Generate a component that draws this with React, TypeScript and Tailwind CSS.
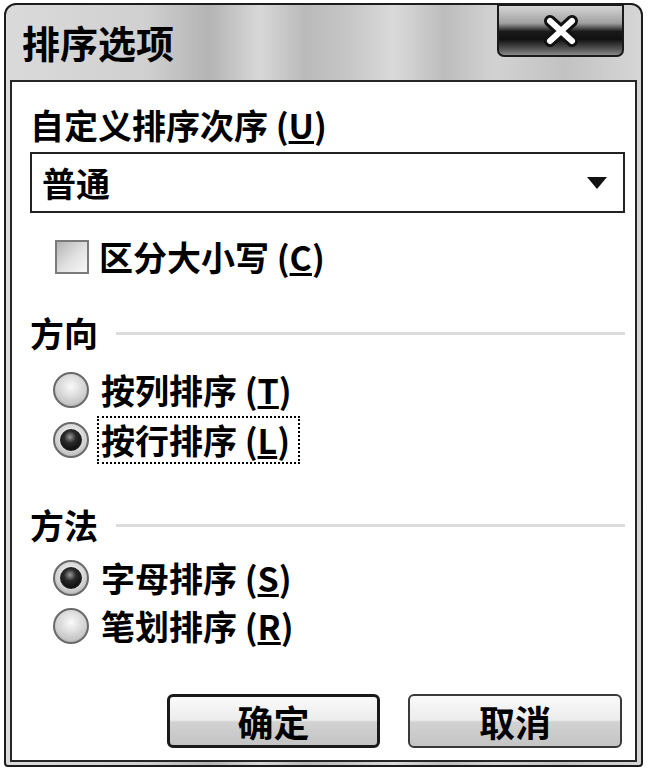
import React from 'react';

const font = "font-['Noto_Sans_CJK_SC','Noto_Sans',sans-serif]";

function Radio({ checked }: { checked?: boolean }) {
  return (
    <span className="w-[36px] h-[36px] rounded-full border-2 border-[#6a6a6a] bg-[radial-gradient(circle_at_50%_40%,#ffffff_0%,#d0d0d0_60%,#9a9a9a_100%)] flex items-center justify-center shrink-0">
      <span
        className={
          checked
            ? 'w-[22px] h-[22px] rounded-full border border-[#222] bg-[radial-gradient(circle_at_45%_35%,#9a9a9a_0%,#2a2a2a_35%,#000_100%)]'
            : 'w-[24px] h-[24px] rounded-full bg-[radial-gradient(circle_at_50%_35%,#fafafa_0%,#d8d8d8_60%,#b8b8b8_100%)]'
        }
      />
    </span>
  );
}

function Section({ title }: { title: string }) {
  return (
    <div className="flex items-center gap-[18px]">
      <span className="text-[34px] leading-none font-bold text-black">{title}</span>
      <div className="flex-1 h-[3px] bg-[#dcdcdc]" />
    </div>
  );
}

function Option({ label, hot, checked, focus }: { label: string; hot: string; checked?: boolean; focus?: boolean }) {
  return (
    <div className="h-[46px] flex items-center ml-[23px] gap-[8px]">
      <Radio checked={checked} />
      <span
        className={
          'text-[34px] leading-none font-bold text-black pl-[2px] pr-[8px] py-[5px] ' +
          (focus ? 'border-2 border-dotted border-black' : 'border-2 border-transparent')
        }
      >
        {label} (<u>{hot}</u>)
      </span>
    </div>
  );
}

export default function App() {
  return (
    <div className={`w-[649px] h-[771px] bg-white pt-[3px] pl-[4px] ${font}`}>
      <div className="w-[639px] h-[764px] border-2 border-[#1c1c1c] rounded-t-[12px] rounded-b-[4px] px-[4px] pb-[3px] flex flex-col bg-[linear-gradient(90deg,#dadada_0%,#d0d0d0_22%,#b4b4b4_32%,#d8d8d8_40%,#bababa_47%,#c6c6c6_54%,#dadada_61%,#bdbdbd_69%,#d2d2d2_77%,#c2c2c2_88%,#d6d6d6_100%)]">
        {/* title bar */}
        <div className="h-[75px] flex items-start justify-between shrink-0">
          <span className="mt-[18px] ml-[12px] text-[38px] leading-none font-bold text-black">排序选项</span>
          <div className="mr-[13px] -mt-[1px] w-[127px] h-[53px] border-2 border-[#1a1a1a] rounded-b-[7px] flex items-center justify-center bg-[linear-gradient(180deg,#d6d6d6_0%,#a0a0a0_35%,#1a1a1a_52%,#111_68%,#555_88%,#8a8a8a_100%)]">
            <svg width="40" height="32" viewBox="0 0 40 32">
              <path d="M9 6 L31 26 M31 6 L9 26" stroke="#111" strokeWidth="12" strokeLinecap="round" />
              <path d="M9 6 L31 26 M31 6 L9 26" stroke="#fff" strokeWidth="6" strokeLinecap="round" />
            </svg>
          </div>
        </div>

        {/* body */}
        <div className="flex-1 bg-white border-2 border-[#262626] pl-[18px] pr-[10px] flex flex-col">
          <div className="mt-[26px] text-[34px] leading-none font-bold text-black">
            自定义排序次序 (<u>U</u>)
          </div>
          <div className="mt-[10px] h-[61px] border-2 border-[#222] flex items-center justify-between pl-[10px] pr-[16px]">
            <span className="text-[34px] leading-none font-bold text-black">普通</span>
            <svg width="20" height="12" viewBox="0 0 20 12">
              <path d="M0 0 H20 L10 12 Z" fill="#111" />
            </svg>
          </div>

          <div className="mt-[24px] h-[40px] flex items-center ml-[25px] gap-[10px]">
            <span className="w-[34px] h-[34px] border-2 border-[#7a7a7a] bg-[linear-gradient(135deg,#b4b4b4_0%,#e2e2e2_55%,#f8f8f8_100%)] shrink-0" />
            <span className="text-[34px] leading-none font-bold text-black">
              区分大小写 (<u>C</u>)
            </span>
          </div>

          <div className="mt-[39px]">
            <Section title="方向" />
          </div>
          <div className="mt-[17px] flex flex-col gap-[4px]">
            <Option label="按列排序" hot="T" />
            <Option label="按行排序" hot="L" checked focus />
          </div>

          <div className="mt-[45px]">
            <Section title="方法" />
          </div>
          <div className="mt-[13px] flex flex-col gap-[2px]">
            <Option label="字母排序" hot="S" checked />
            <Option label="笔划排序" hot="R" />
          </div>

          <div className="mt-[45px] flex justify-end gap-[28px] pr-[3px]">
            <button className="w-[213px] h-[54px] border-[3px] border-[#1a1a1a] rounded-[6px] bg-[linear-gradient(180deg,#fafafa_0%,#ececec_48%,#d2d2d2_52%,#c4c4c4_100%)] text-[36px] leading-none font-bold text-black">
              确定
            </button>
            <button className="w-[214px] h-[54px] border-2 border-[#3a3a3a] rounded-[6px] bg-[linear-gradient(180deg,#fafafa_0%,#ececec_48%,#d2d2d2_52%,#c4c4c4_100%)] text-[36px] leading-none font-bold text-black">
              取消
            </button>
          </div>
        </div>
      </div>
    </div>
  );
}
